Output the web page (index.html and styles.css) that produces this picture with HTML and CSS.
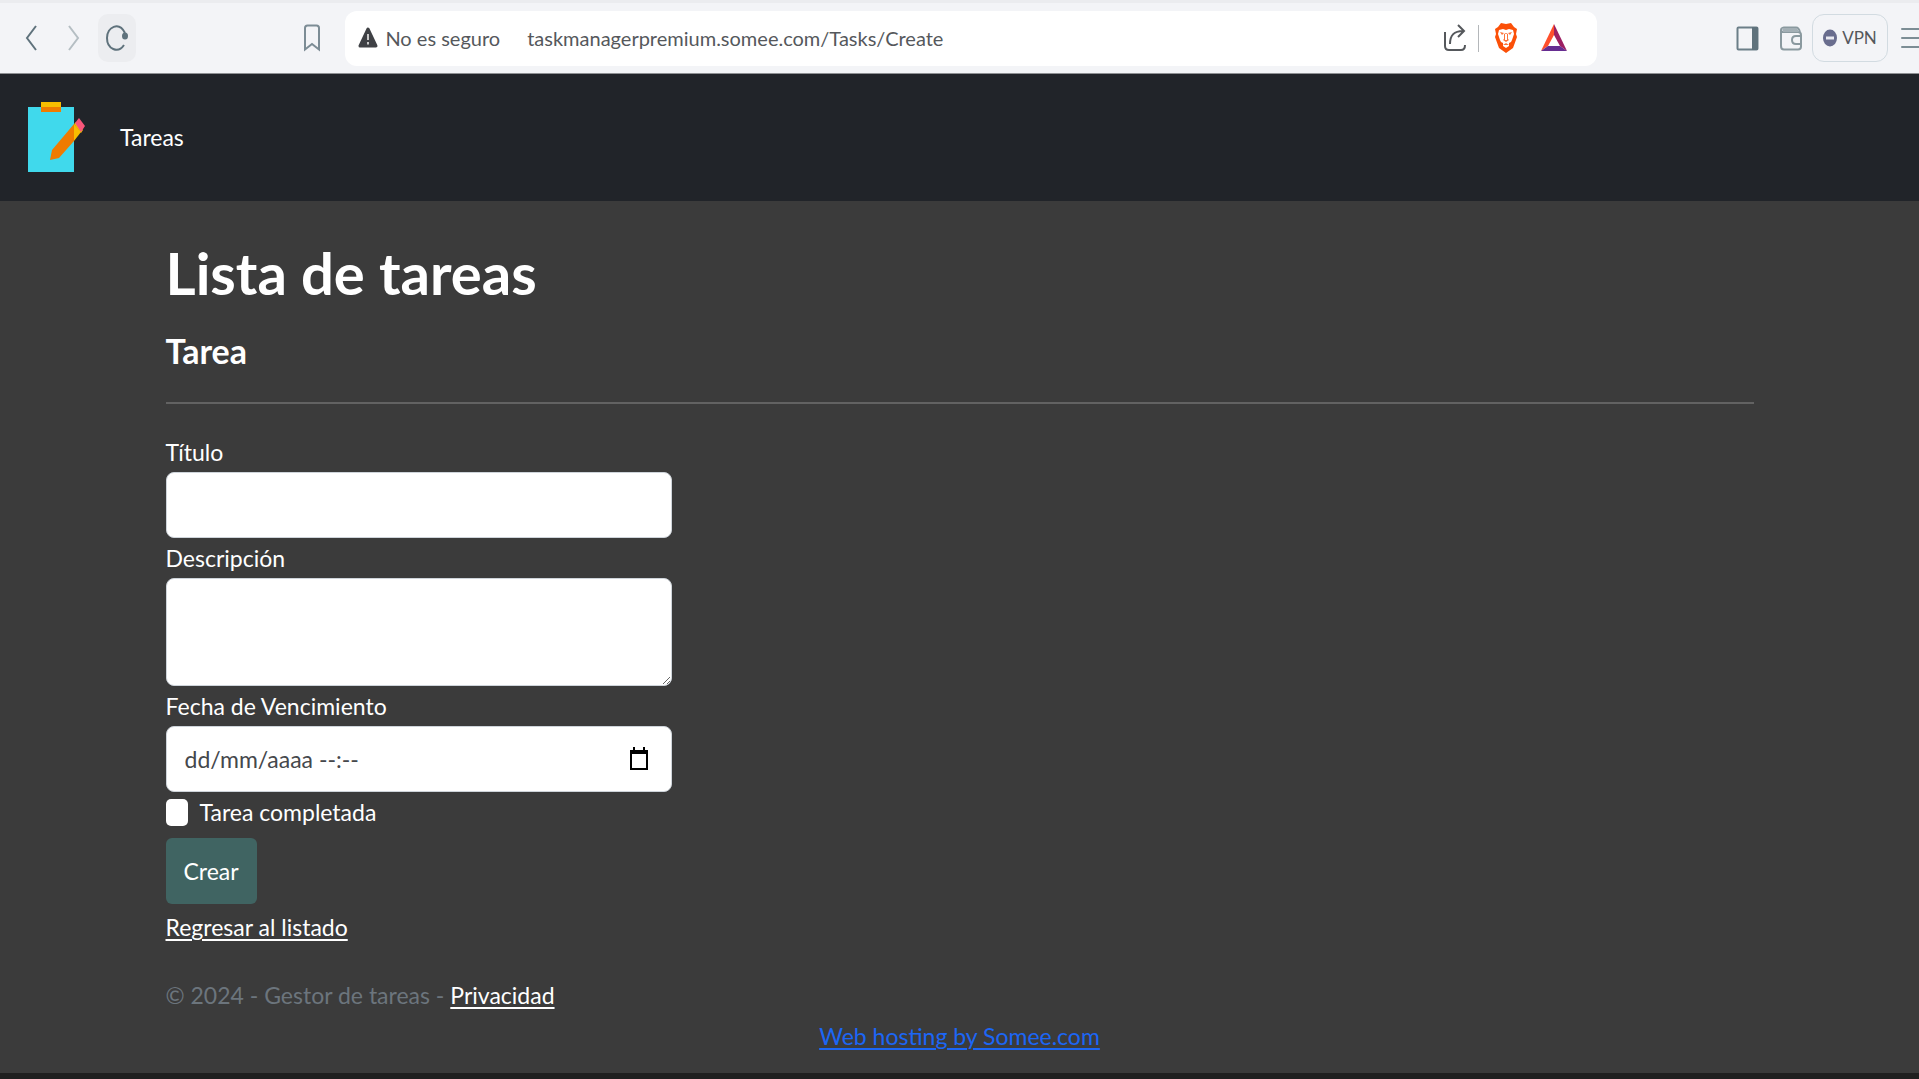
FILE: index.html
```html
<!DOCTYPE html>
<html lang="es">
<head>
<meta charset="utf-8">
<title>Lista de tareas</title>
<link rel="stylesheet" href="styles.css">
</head>
<body>
<div class="toolbar">
  <div class="toolbar-left">
    <button class="tool" type="button" aria-label="Atrás"><svg width="12" height="26" viewBox="0 0 12 26"><path d="M11 1 2 13l9 12" fill="none" stroke="#5f727c" stroke-width="2"/></svg></button>
    <button class="tool" type="button" aria-label="Adelante"><svg width="12" height="26" viewBox="0 0 12 26"><path d="m1 1 9 12-9 12" fill="none" stroke="#b5bec3" stroke-width="2"/></svg></button>
    <button class="tool tool-reload" type="button" aria-label="Recargar"><svg width="24" height="28" viewBox="0 0 24 28"><path d="M19 21C13 30 2 25 2 14S14-3 20 9" fill="none" stroke="#5f727c" stroke-width="2"/><ellipse cx="20" cy="12" rx="3" ry="3.500" fill="#5f727c"/></svg></button>
    <button class="tool tool-bookmark" type="button" aria-label="Marcador"><svg width="18" height="28" viewBox="0 0 18 28"><path d="M2 24V4q0-2.500 2.500-2.500h9Q16 1.500 16 4v21.500L9 20l-7 5.500z" fill="none" stroke="#7c8c95" stroke-width="2"/></svg></button>
  </div>
  <div class="address">
    <button class="site-info" type="button"><svg width="20" height="22" viewBox="0 0 20 22"><path d="M10 2 18 19H2z" fill="#3f4145" stroke="#3f4145" stroke-width="3" stroke-linejoin="round"/><path d="M10 7v6m0 2v2.500" stroke="#c8c8c8" stroke-width="2"/></svg>No es seguro</button>
    <input class="url" type="text" aria-label="Dirección" value="taskmanagerpremium.somee.com/Tasks/Create">
    <button class="tool" type="button" aria-label="Compartir"><svg width="24" height="28" viewBox="0 0 24 28"><path d="M2 8v14q0 4 4 4h12q4 0 4-5M7 20C7 12 10 7 20 7M15 1l6 6-6 6" fill="none" stroke="#55585c" stroke-width="2"/></svg></button>
    <span class="divider"></span>
    <button class="tool tool-shield" type="button" aria-label="Escudo"><svg width="24" height="32" viewBox="0 0 24 32"><path d="m7 1 5 1 5-1 3 4 3 2-1 5 1 3-4 11-7 5-7-5L1 15l1-3-1-5 3-2z" fill="#fb5008"/><path d="m5 8 4-1 3 1 3-1 4 1 1 4-2 6-1 2-2 1 0 3-3 2-3-2v-3l-2-1-1-2-2-6z" fill="#fff"/><path d="m6 10 4 1-2 2zm12 0-4 1 2 2zM10 12l2-1 2 1v5l1 1-3 2-3-2 1-1zm-2 5 1 3m7-3-1 3M9 23l3-2 3 2" fill="#fb5008" opacity=".8"/><path d="M12 12v6" stroke="#fff" stroke-width="2"/></svg></button>
    <button class="tool" type="button" aria-label="Recompensas"><svg width="26" height="28" viewBox="0 0 26 28"><path d="M13 0 0 27l7-5 6-11z" fill="#ff4f2c"/><path d="M13 0v11l6 11 7 5z" fill="#9d1f62"/><path d="m0 27 7-5h12l7 5z" fill="#662d91"/></svg></button>
  </div>
  <div class="toolbar-right">
    <button class="side" type="button" aria-label="Panel lateral"><svg width="23" height="25" viewBox="0 0 23 25"><rect x="1.500" y="1.500" width="20" height="22" rx="1" fill="none" stroke="#6b7e88" stroke-width="2"/><path d="M16 1h5q1 0 1 1v21q0 1-1 1h-5z" fill="#5f727c"/></svg></button>
    <button class="side" type="button" aria-label="Cartera"><svg width="23" height="25" viewBox="0 0 23 25"><path d="M2 4v16q0 3.500 3 3.500h14q3 0 3-3V9q0-3-3-3H4Q2 6 2 4t3-2.500h12q3 0 4 5M22 10h-5q-4 0-4 4t4 4h5" fill="none" stroke="#8a999f" stroke-width="2"/><path d="M3 2h15l2 4H4z" fill="#a3afb5"/></svg></button>
    <button class="vpn" type="button"><svg width="14" height="18" viewBox="0 0 14 18"><ellipse cx="7" cy="9" rx="7" ry="8.500" fill="#696d8e"/><path d="M3 9h8" stroke="#e8e9f0" stroke-width="3"/></svg>VPN</button>
    <button class="menu" type="button" aria-label="Menú"><svg width="18" height="22" viewBox="0 0 18 22"><path d="M1 2h17M1 11h17M1 20h17" stroke="#7c8d95" stroke-width="2" stroke-linecap="round"/></svg></button>
  </div>
</div>
<header class="navbar">
  <a href="#" aria-label="Inicio"><svg width="58" height="72" viewBox="0 0 58 72"><path d="M0 6h46v65H0z" fill="#40d9ec"/><path d="M13 1h20v5H13z" fill="#f8bd00"/><path d="M13 6h20v5H13z" fill="#ef7b00"/><path d="m46 23 7 8-7 9z" fill="#f8bd00"/><path d="m46 23 2-2 7 8-2 3z" fill="#f8bd00"/><path d="m22 59 2-10 22-26v17L31 57z" fill="#ef7b00"/><path d="m47 22 4-5 6 8-4 6z" fill="#f9567a"/></svg></a>
  <nav><a class="nav-link" href="#">Tareas</a></nav>
</header>
<main class="container">
  <h1>Lista de tareas</h1>
  <h2>Tarea</h2>
  <hr>
  <div class="columns">
    <form>
      <label for="titulo">Título</label>
      <input class="control" id="titulo" type="text">
      <label for="descripcion">Descripción</label>
      <textarea class="control area" id="descripcion"></textarea>
      <label for="fecha">Fecha de Vencimiento</label>
      <div class="control date">
        <input id="fecha" type="text" placeholder="dd/mm/aaaa --:--">
        <button type="button" aria-label="Abrir calendario"><svg width="18" height="24" viewBox="0 0 18 24"><path d="M1 4h16v18H1z" fill="none" stroke="#000" stroke-width="2"/><path d="M0 3h18v4H0zM3 0h2v4H3zm10 0h2v4h-2z"/></svg></button>
      </div>
      <label class="check"><input type="checkbox">Tarea completada</label>
      <button class="submit" type="submit">Crear</button>
    </form>
  </div>
  <a class="back" href="#">Regresar al listado</a>
</main>
<footer>
  <div class="container copyright">© 2024 - Gestor de tareas - <a href="#">Privacidad</a></div>
  <div class="hosting"><a href="#">Web hosting by Somee.com</a></div>
</footer>
</body>
</html>
```
FILE: styles.css
```css
* { box-sizing: border-box; }
body {
  margin: 0;
  min-height: 100vh;
  display: flex;
  flex-direction: column;
  background: #3b3b3b;
  border-bottom: 6px solid #202020;
  color: #fff;
  font: 23px/40px Lato, "Open Sans", sans-serif;
}
button, input, textarea { font: inherit; color: inherit; margin: 0; }
button { border: 0; padding: 0; background: none; }
svg { display: block; }
a { color: #fff; text-underline-offset: 3px; text-decoration-thickness: 2px; }

.toolbar {
  display: flex;
  align-items: center;
  height: 74px;
  border-top: 3px solid #ebecef;
  border-bottom: 1px solid #8e9093;
  background: #f3f4f7;
  color: #55585c;
  font-size: 20px;
}
.toolbar-left { flex: 0 0 18%; display: flex; gap: 5px; padding: 0 14px 0 12px; }
.tool { display: flex; align-items: center; justify-content: center; width: 38px; height: 48px; flex: none; }
.tool-reload { background: #ecedf0; border-radius: 10px; }
.tool-bookmark { margin-left: auto; }
.address {
  flex: 1;
  display: flex;
  align-items: center;
  height: 55px;
  padding: 0 24px 0 13px;
  border-radius: 12px;
  background: #fff;
}
.site-info { display: flex; align-items: center; gap: 7px; }
.url { flex: 1; min-width: 0; margin-left: 27px; padding: 0; border: 0; outline: 0; background: none; }
.divider { width: 1px; height: 27px; margin: 0 8px 0 4px; background: #b4b7ba; }
.tool-shield { margin-right: 10px; }
.toolbar-right { flex: 0 0 322px; display: flex; align-items: center; justify-content: flex-end; }
.side { margin-right: 20px; }
.side + .side { margin-right: 10px; }
.vpn {
  display: flex;
  align-items: center;
  justify-content: center;
  gap: 5px;
  width: 76px;
  height: 48px;
  margin-right: 13px;
  border: 1px solid #d2dbe1;
  border-radius: 12px;
  font-size: 17px;
}

.navbar { display: flex; align-items: center; gap: 34px; height: 127px; padding: 0 28px 2px; background: #212429; }
.nav-link { text-decoration: none; }

.container { width: 100%; max-width: 1624px; margin: 0 auto; padding: 0 18px; }
h1 { margin: 36px 0 12px; font-size: 58px; line-height: 72px; font-weight: 700; }
h2 { margin: 0; font-size: 34px; line-height: 60px; font-weight: 700; }
hr { margin: 21px 0 28px; border: 0; border-top: 2px solid #626262; }
.columns { display: grid; grid-template-columns: repeat(3, 1fr); gap: 34px; }
form { display: flex; flex-direction: column; }
.control { width: 100%; height: 66px; padding: 0 18px; border: 1px solid #ced4da; border-radius: 8px; background: #fff; color: #212529; outline: 0; }
.area { height: 108px; display: block; resize: both; }
.date { display: flex; align-items: center; padding-right: 23px; }
.date input { flex: 1; min-width: 0; padding: 0; border: 0; outline: 0; background: none; }
.date input::placeholder { color: #45484c; opacity: 1; }
.check { display: flex; align-items: center; gap: 12px; }
.check input { appearance: none; width: 22px; height: 27px; border-radius: 5px; background: #fff; }
.submit { align-self: flex-start; height: 66px; margin: 6px 0 3px; padding: 0 18px; border-radius: 6px; background: #406462; }
.back { display: inline-block; }
.copyright { margin-top: 28px; color: #6c757d; }
.hosting { margin-top: 1px; text-align: center; }
.hosting a { color: #1c66f5; }
```
